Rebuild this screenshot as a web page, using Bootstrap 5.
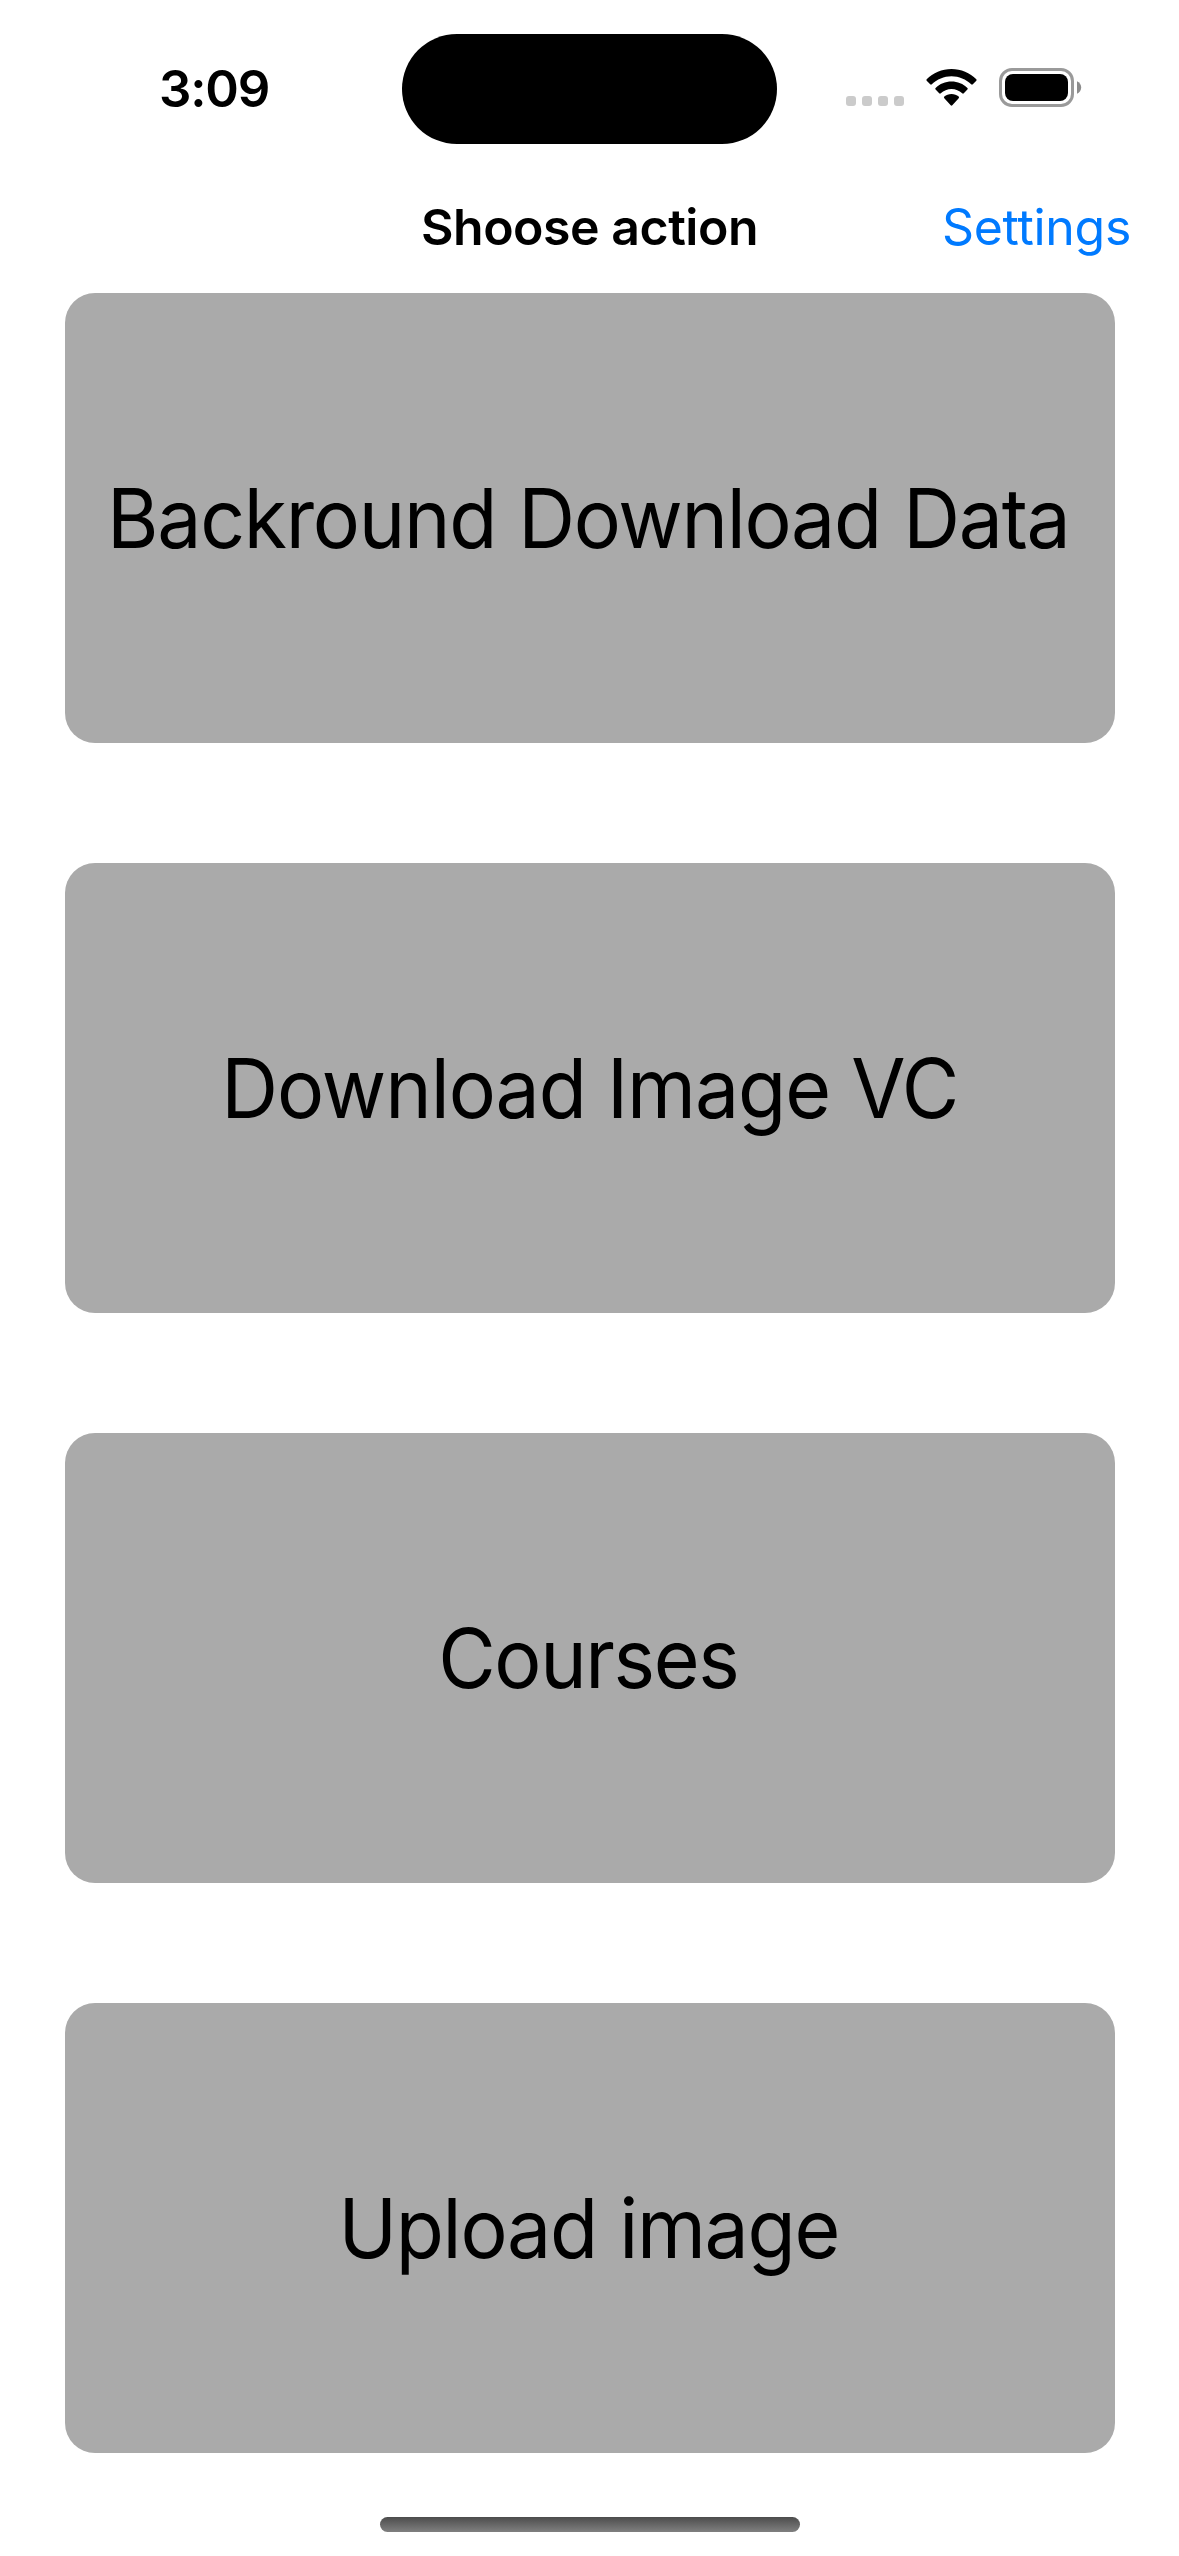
<!DOCTYPE html>
<html lang="en">
<head>
<meta charset="utf-8">
<meta name="viewport" content="width=device-width, initial-scale=1">
<title>Shoose action</title>
<link href="https://cdn.jsdelivr.net/npm/bootstrap@5.3.0/dist/css/bootstrap.min.css" rel="stylesheet">
<style>
  body { font-family: Inter, "Liberation Sans", sans-serif; color: #000; background: #fff; line-height: normal; }
  .phone { width: 1179px; height: 2556px; }
  .status-bar { height: 176px; }
  .clock-zone { width: 402px; padding-left: 159px; }
  .clock { font-size: 51px; font-weight: 600; letter-spacing: -1.2px; }
  .island { width: 375px; height: 110px; margin-top: 2px; border-radius: 55px; background: #000; }
  .title-bar { height: 117px; padding: 0 48px 16px; font-size: 50px; }
  .bar-title { font-weight: 600; letter-spacing: -.475px; }
  .bar-link { color: #007aff; letter-spacing: -.3px; }
  .actions { padding: 0 64px 0 65px; gap: 120px; }
  .tile { height: 450px; padding-right: 3px; border-radius: 30px; background: #aaa; color: #000; font-size: 82px; letter-spacing: -1.35px; word-spacing: 1.5px; }
  .tile span { transform: scaleX(.96); white-space: nowrap; }
  .tile-image { padding-right: 1px; }
  .tile-image span { letter-spacing: -1.1px; word-spacing: 0; }
  .tile-courses span { letter-spacing: -1.45px; }
  .home-indicator { width: 420px; height: 15px; margin-top: 64px; border-radius: 8px; background: linear-gradient(#4c4c4c, #808080); }
</style>
</head>
<body>
<div class="phone d-flex flex-column overflow-hidden">
  <header class="status-bar d-flex align-items-center flex-shrink-0">
    <div class="clock-zone"><span class="clock">3:09</span></div>
    <div class="island"></div>
    <svg width="402" height="176" viewBox="777 0 402 176" aria-label="Signal, Wi-Fi and battery">
      <g fill="#cbcbcb">
        <rect x="846" y="96" width="10" height="10" rx="3"/>
        <rect x="862" y="96" width="10" height="10" rx="3"/>
        <rect x="878" y="96" width="10" height="10" rx="3"/>
        <rect x="894" y="96" width="10" height="10" rx="3"/>
      </g>
      <path d="M951.5 69C961 69 970 72.800 976.300 79.200Q977 80 976.300 80.800L972.800 84.300Q972 85 971.200 84.300C966 79.300 959 76.300 951.500 76.300S937 79.300 931.800 84.300Q931 85 930.200 84.300L926.700 80.800Q926 80 926.700 79.200C933 72.800 942 69 951.500 69Z"/>
      <path d="M951.500 81.500C957.600 81.500 963.200 83.900 967.400 87.900Q968.200 88.700 967.400 89.500L963.800 93.300Q963 94 962.200 93.300C959.300 90.700 955.600 89.100 951.500 89.100S943.700 90.700 940.800 93.300Q940 94 939.200 93.300L935.600 89.500Q934.800 88.700 935.600 87.900C939.800 83.900 945.400 81.500 951.500 81.500Z"/>
      <path d="M951.500 94C954.300 94 956.800 95 958.700 96.600Q959.500 97.400 958.700 98.200L952.300 105.300Q951.500 106.100 950.700 105.300L944.300 98.200Q943.500 97.400 944.300 96.600C946.200 95 948.700 94 951.500 94Z"/>
      <rect x="1000.500" y="69.500" width="72" height="36" rx="11.500" fill="none" stroke="#9a9a9a" stroke-width="3"/>
      <rect x="1005" y="74" width="63" height="27" rx="8"/>
      <path d="M1077 81.300C1079.500 82.300 1081.200 84.700 1081.200 87.500S1079.500 92.700 1077 93.700Z" fill="#8c8c8c"/>
    </svg>
  </header>
  <nav class="title-bar row g-0 align-items-center flex-shrink-0">
    <div class="col-3"></div>
    <div class="col-6 text-center bar-title">Shoose action</div>
    <div class="col-3 text-end"><a href="#" class="bar-link text-decoration-none">Settings</a></div>
  </nav>
  <main class="actions d-flex flex-column flex-shrink-0">
    <div class="tile d-flex align-items-center justify-content-center"><span>Backround Download Data</span></div>
    <div class="tile tile-image d-flex align-items-center justify-content-center"><span>Download Image VC</span></div>
    <div class="tile tile-courses d-flex align-items-center justify-content-center"><span>Courses</span></div>
    <div class="tile d-flex align-items-center justify-content-center"><span>Upload image</span></div>
  </main>
  <div class="home-indicator align-self-center flex-shrink-0"></div>
</div>
<script src="https://cdn.jsdelivr.net/npm/bootstrap@5.3.0/dist/js/bootstrap.bundle.min.js"></script>
</body>
</html>
